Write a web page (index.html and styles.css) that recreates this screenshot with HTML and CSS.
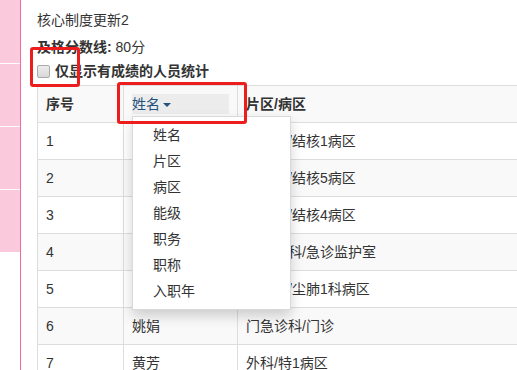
FILE: index.html
```html
<!DOCTYPE html>
<html lang="zh-CN">
<head>
    <meta charset="UTF-8">
    <title>核心制度更新2</title>
    <link rel="stylesheet" href="styles.css">
</head>
<body>
    <div class="page">
        <aside class="side">
            <div class="side-item"></div>
            <div class="side-item"></div>
            <div class="side-item"></div>
            <div class="side-item"></div>
        </aside>

        <main class="main">
            <p class="title">核心制度更新2</p>
            <p class="score"><strong>及格分数线:</strong> 80分</p>
            <label class="only-scored">
                <input type="checkbox" class="check">
                <span>仅显示有成绩的人员统计</span>
            </label>

            <table class="result-table">
                <thead>
                    <tr>
                        <th class="col-no">序号</th>
                        <th class="col-name">
                            <div class="dropdown">
                                <a href="#" class="dropdown-toggle">姓名<span class="caret"></span></a>
                                <ul class="dropdown-menu">
                                    <li><a href="#">姓名</a></li>
                                    <li><a href="#">片区</a></li>
                                    <li><a href="#">病区</a></li>
                                    <li><a href="#">能级</a></li>
                                    <li><a href="#">职务</a></li>
                                    <li><a href="#">职称</a></li>
                                    <li><a href="#">入职年</a></li>
                                </ul>
                            </div>
                        </th>
                        <th>片区/病区</th>
                    </tr>
                </thead>
                <tbody>
                    <!-- names of rows 1-5 sit under the open menu -->
                    <tr><td>1</td><td></td><td>结核科/结核1病区</td></tr>
                    <tr><td>2</td><td></td><td>结核科/结核5病区</td></tr>
                    <tr><td>3</td><td></td><td>结核科/结核4病区</td></tr>
                    <tr><td>4</td><td></td><td>急诊内科/急诊监护室</td></tr>
                    <tr><td>5</td><td></td><td>尘肺科/尘肺1科病区</td></tr>
                    <tr><td>6</td><td>姚娟</td><td>门急诊科/门诊</td></tr>
                    <tr><td>7</td><td>黄芳</td><td>外科/特1病区</td></tr>
                </tbody>
            </table>
        </main>
    </div>

    <!-- annotation boxes -->
    <div class="mark mark-check"></div>
    <div class="mark mark-head"></div>
</body>
</html>
```

FILE: styles.css
```css
html, body {
    margin: 0;
    padding: 0;
    height: 100%;
    overflow: hidden;
}

body {
    font-family: "Liberation Sans", "Noto Sans CJK SC", sans-serif;
    font-size: 14px;
    line-height: 20px;
    color: #333;
    background-color: #fff;
}

.page {
    display: flex;
    height: 100%;
}

/* left menu strip */
.side {
    width: 20px;
    flex-shrink: 0;
    border-right: 1px solid #f06a9c;
    display: flex;
    flex-direction: column;
    gap: 1px;
}

.side-item {
    height: 62px;
    background-color: #fac9dc;
}

.side-item:first-child {
    height: 63px;
}

.main {
    flex: 1;
    padding: 10px 0 0 16px;
    min-width: 0;
}

.title {
    margin: 0 0 7px;
}

.score {
    margin: 0 0 4px;
}

.score strong,
.only-scored span {
    font-weight: bold;
}

.only-scored {
    display: flex;
    align-items: center;
    gap: 5px;
    height: 20px;
}

.check {
    appearance: none;
    width: 13px;
    height: 13px;
    margin: 0;
    border: 1px solid #a9a9a9;
    border-radius: 2px;
    background: linear-gradient(#ececec, #d9d9d9);
}

/* table */
.result-table {
    width: 560px;
    margin-top: 4px;
    border-collapse: collapse;
    table-layout: fixed;
}

.result-table th,
.result-table td {
    height: 20px;
    padding: 8px;
    border: 1px solid #ddd;
    text-align: left;
    vertical-align: top;
    white-space: nowrap;
}

.result-table th {
    font-weight: bold;
    background-color: #f9f9f9;
}

.result-table tbody tr:nth-child(even) td {
    background-color: #f9f9f9;
}

.col-no {
    width: 69px;
}

.col-name {
    width: 97px;
}

/* dropdown in header */
.dropdown {
    position: relative;
}

.dropdown-toggle {
    display: block;
    background-color: #ececec;
    color: #23527c;
    text-decoration: none;
    font-weight: normal;
}

.caret {
    display: inline-block;
    width: 0;
    height: 0;
    margin-left: 3px;
    vertical-align: middle;
    border-top: 4px solid;
    border-left: 4px solid transparent;
    border-right: 4px solid transparent;
}

.dropdown-menu {
    position: absolute;
    top: 100%;
    left: 0;
    z-index: 10;
    width: 157px;
    margin: 2px 0 0;
    padding: 5px 0;
    list-style: none;
    background-color: #fff;
    border: 1px solid rgba(0, 0, 0, 0.15);
    box-shadow: 0 6px 12px rgba(0, 0, 0, 0.175);
}

.dropdown-menu li a {
    display: block;
    padding: 3px 20px;
    color: #333;
    font-weight: normal;
    text-decoration: none;
}

/* red annotation rectangles */
.mark {
    position: absolute;
    z-index: 20;
    box-sizing: border-box;
    border: 3px solid #ee1d1d;
    border-radius: 3px;
}

.mark-check {
    left: 30px;
    top: 47px;
    width: 50px;
    height: 40px;
}

.mark-head {
    left: 117px;
    top: 82px;
    width: 130px;
    height: 42px;
}
```
